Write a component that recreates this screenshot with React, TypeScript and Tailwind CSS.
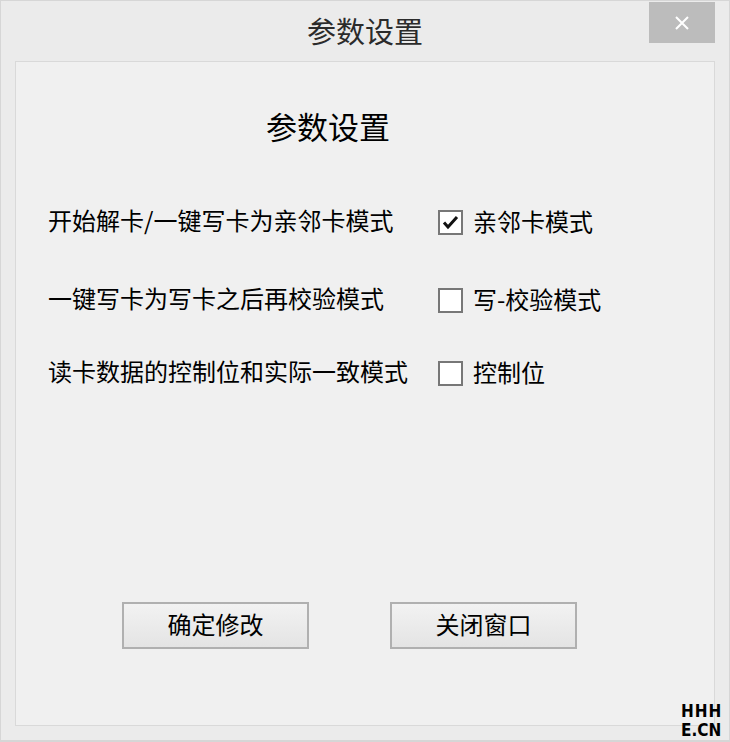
import React from "react";

const cjk = { fontFamily: '"Noto Sans CJK SC", "Noto Sans", sans-serif' };

function CheckBox({ checked }: { checked?: boolean }) {
  return (
    <div className="w-[25px] h-[25px] border-2 border-[#777777] bg-white flex items-center justify-center shrink-0">
      {checked && (
        <svg width="17" height="15" viewBox="0 0 17 15">
          <path d="M2 7.5 L6 12 L15 2" fill="none" stroke="#111" strokeWidth="3" strokeLinejoin="miter" />
        </svg>
      )}
    </div>
  );
}

export default function App() {
  const options = [
    { label: "开始解卡/一键写卡为亲邻卡模式", name: "亲邻卡模式", checked: true, mt: "mt-[69px]" },
    { label: "一键写卡为写卡之后再校验模式", name: "写-校验模式", checked: false, mt: "mt-[53px]" },
    { label: "读卡数据的控制位和实际一致模式", name: "控制位", checked: false, mt: "mt-[48px]" },
  ];

  return (
    <div className="relative w-[730px] h-[742px] bg-[#ebebeb] border-t border-l border-r border-b-2 border-[#d6d6d6] overflow-hidden" style={cjk}>
      {/* title bar */}
      <div className="h-[60px] flex items-center justify-center">
        <span className="text-[29px] leading-[30px] text-[#2b2b2b] -mt-[2px]">参数设置</span>
      </div>
      <button className="absolute top-[1px] right-[14px] w-[66px] h-[41px] bg-[#bcbcbc] flex items-center justify-center">
        <svg width="14" height="14" viewBox="0 0 14 14">
          <path d="M1 1 L13 13 M13 1 L1 13" stroke="#fff" strokeWidth="2" />
        </svg>
      </button>

      {/* content panel */}
      <div className="mx-[14px] h-[665px] bg-[#f0f0f0] border border-[#d9d9d9] flex flex-col text-black">
        <div className="mt-[48px] ml-[250px] text-[31px] leading-[31px]">参数设置</div>

        {options.map((o) => (
          <div key={o.name} className={`${o.mt} flex items-center h-[25px] pl-[32px]`}>
            <span className="w-[390px] text-[24px] leading-[24px] pb-[6px]">{o.label}</span>
            <CheckBox checked={o.checked} />
            <span className="ml-[10px] text-[24px] leading-[24px] pb-[4px]">{o.name}</span>
          </div>
        ))}

        <div className="mt-[216px] ml-[106px] flex gap-[81px]">
          <button className="w-[187px] h-[47px] pb-[4px] border-2 border-[#b0b0b0] bg-gradient-to-b from-[#f2f2f2] to-[#e4e4e4] text-[24px] leading-[24px] text-black">
            确定修改
          </button>
          <button className="w-[187px] h-[47px] pb-[4px] border-2 border-[#b0b0b0] bg-gradient-to-b from-[#f2f2f2] to-[#e4e4e4] text-[24px] leading-[24px] text-black">
            关闭窗口
          </button>
        </div>
      </div>

      {/* watermark */}
      <div
        className="absolute right-0 bottom-0 w-[48px] text-[17px] leading-[19px] font-bold text-black"
        style={{ fontFamily: '"DejaVu Sans Condensed", "Liberation Sans", sans-serif' }}
      >
        <div className="tracking-[1px]">HHH</div>
        <div>E.CN</div>
      </div>
    </div>
  );
}
